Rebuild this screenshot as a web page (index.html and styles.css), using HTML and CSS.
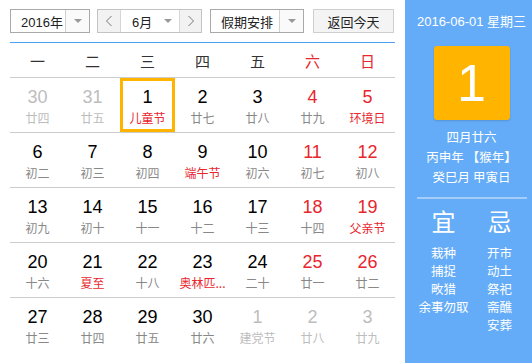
FILE: index.html
```html
<!DOCTYPE html>
<html lang="zh">
<head>
<meta charset="utf-8">
<link rel="stylesheet" href="styles.css">
</head>
<body>
<div class="wrap">
  <div class="main">
    <div class="toolbar">
      <div class="sel sel-year">
        <span class="sel-text">2016年</span>
        <span class="sel-drop"><i class="tri"></i></span>
      </div>
      <div class="sel sel-month">
        <span class="nav"><svg width="8" height="12" viewBox="0 0 8 12"><path d="M6.5 1 L1.5 6 L6.5 11" fill="none" stroke="#777" stroke-width="1"/></svg></span>
        <span class="sel-text month-text">6月</span>
        <span class="month-drop"><i class="tri"></i></span>
        <span class="nav nav-r"><svg width="8" height="12" viewBox="0 0 8 12"><path d="M1.5 1 L6.5 6 L1.5 11" fill="none" stroke="#777" stroke-width="1"/></svg></span>
      </div>
      <div class="sel sel-holiday">
        <span class="sel-text">假期安排</span>
        <span class="sel-drop"><i class="tri"></i></span>
      </div>
      <div class="btn-today">返回今天</div>
    </div>
    <div class="weekdays">
      <div>一</div><div>二</div><div>三</div><div>四</div><div>五</div><div class="red">六</div><div class="red">日</div>
    </div>
    <div class="grid">
      <div class="row">
        <div class="cell other"><b>30</b><span>廿四</span></div>
        <div class="cell other"><b>31</b><span>廿五</span></div>
        <div class="cell sel-day"><b>1</b><span class="fest">儿童节</span></div>
        <div class="cell"><b>2</b><span>廿七</span></div>
        <div class="cell"><b>3</b><span>廿八</span></div>
        <div class="cell wk"><b>4</b><span>廿九</span></div>
        <div class="cell wk"><b>5</b><span class="fest">环境日</span></div>
      </div>
      <div class="row">
        <div class="cell"><b>6</b><span>初二</span></div>
        <div class="cell"><b>7</b><span>初三</span></div>
        <div class="cell"><b>8</b><span>初四</span></div>
        <div class="cell"><b>9</b><span class="fest">端午节</span></div>
        <div class="cell"><b>10</b><span>初六</span></div>
        <div class="cell wk"><b>11</b><span>初七</span></div>
        <div class="cell wk"><b>12</b><span>初八</span></div>
      </div>
      <div class="row">
        <div class="cell"><b>13</b><span>初九</span></div>
        <div class="cell"><b>14</b><span>初十</span></div>
        <div class="cell"><b>15</b><span>十一</span></div>
        <div class="cell"><b>16</b><span>十二</span></div>
        <div class="cell"><b>17</b><span>十三</span></div>
        <div class="cell wk"><b>18</b><span>十四</span></div>
        <div class="cell wk"><b>19</b><span class="fest">父亲节</span></div>
      </div>
      <div class="row">
        <div class="cell"><b>20</b><span>十六</span></div>
        <div class="cell"><b>21</b><span class="fest">夏至</span></div>
        <div class="cell"><b>22</b><span>十八</span></div>
        <div class="cell"><b>23</b><span class="fest">奥林匹...</span></div>
        <div class="cell"><b>24</b><span>二十</span></div>
        <div class="cell wk"><b>25</b><span>廿一</span></div>
        <div class="cell wk"><b>26</b><span>廿二</span></div>
      </div>
      <div class="row last">
        <div class="cell"><b>27</b><span>廿三</span></div>
        <div class="cell"><b>28</b><span>廿四</span></div>
        <div class="cell"><b>29</b><span>廿五</span></div>
        <div class="cell"><b>30</b><span>廿六</span></div>
        <div class="cell other"><b>1</b><span>建党节</span></div>
        <div class="cell other"><b>2</b><span>廿八</span></div>
        <div class="cell other"><b>3</b><span>廿九</span></div>
      </div>
    </div>
  </div>
  <div class="side">
    <div class="side-date">2016-06-01 星期三</div>
    <div class="big-day">1</div>
    <div class="lunar">
      <div>四月廿六</div>
      <div>丙申年 【猴年】</div>
      <div>癸巳月 甲寅日</div>
    </div>
    <div class="sep"></div>
    <div class="yiji">
      <div class="col">
        <div class="yj-title">宜</div>
        <div>栽种</div><div>捕捉</div><div>畋猎</div><div>余事勿取</div>
      </div>
      <div class="col">
        <div class="yj-title">忌</div>
        <div>开市</div><div>动土</div><div>祭祀</div><div>斋醮</div><div>安葬</div>
      </div>
    </div>
  </div>
</div>
</body>
</html>
```
FILE: styles.css
```css
* { box-sizing: border-box; }
html, body { margin: 0; padding: 0; background: #fff; }
body {
  font-family: "Liberation Sans", "Noto Sans CJK SC", sans-serif;
  color: #000;
  width: 532px;
  height: 363px;
  overflow: hidden;
}
.wrap { display: flex; height: 363px; }
.main { width: 405px; padding: 0 10px; }

.toolbar {
  display: flex;
  align-items: stretch;
  height: 43px;
  padding: 9px 0 10px;
  border-bottom: 1px solid #4ea1f2;
}
.sel {
  display: flex;
  border: 1px solid #a9a9a9;
  background: #fff;
  font-size: 13px;
  color: #222;
  height: 24px;
}
.sel-text { display: flex; align-items: center; padding-left: 10px; flex: 1; }
.sel-drop {
  width: 24px;
  border-left: 1px solid #d0d0d0;
  background: #fafafa;
  display: flex; align-items: center; justify-content: center;
}
.tri {
  display: block;
  width: 0; height: 0;
  border-left: 4px solid transparent;
  border-right: 4px solid transparent;
  border-top: 4px solid #999;
}
.sel-year { width: 80px; }
.sel-month { width: 105px; margin-left: 7px; border-color: #c3c3c3; }
.nav {
  width: 22px;
  background: #f2f2f2;
  display: flex; align-items: center; justify-content: center;
}
.nav-r { border-left: 1px solid #d6d6d6; }
.month-text { border-left: 1px solid #d6d6d6; padding-left: 11px; }
.month-drop { width: 22px; display: flex; align-items: center; justify-content: center; }
.sel-holiday { width: 94px; margin-left: 8px; }
.btn-today {
  width: 81px;
  margin-left: 9px;
  height: 24px;
  border: 1px solid #cfcfcf;
  background: #f4f4f4;
  font-size: 13px;
  color: #222;
  display: flex; align-items: center; justify-content: center;
}

.weekdays {
  display: grid;
  grid-template-columns: repeat(7, 55px);
  height: 35px;
  border-bottom: 1px solid #cccccc;
  font-family: "Noto Sans CJK SC", sans-serif;
  font-size: 15px;
  color: #333;
}
.weekdays div { display: flex; align-items: center; justify-content: center; }
.weekdays .red { color: #e8262d; }

.row {
  display: grid;
  grid-template-columns: repeat(7, 55px);
  height: 55px;
  border-bottom: 1px solid #cccccc;
}
.row.last { border-bottom: none; }
.cell {
  display: flex;
  flex-direction: column;
  align-items: center;
  padding-top: 8px;
}
.cell b {
  font-weight: normal;
  font-size: 18px;
  line-height: 22px;
  color: #000;
}
.cell span {
  font-family: "Noto Sans CJK SC", sans-serif;
  font-size: 12px;
  line-height: 18px;
  margin-top: 1px;
  color: #888;
}
.cell.wk b { color: #e8262d; }
.cell .fest { color: #e8262d; }
.cell.other b, .cell.other span { color: #bdbdbd; }
.cell.sel-day { border: 3px solid #ffb400; height: 54px; padding-top: 5px; }

.side {
  width: 127px;
  background: #64acf7;
  color: #fff;
  padding-left: 6px;
  display: flex;
  flex-direction: column;
  align-items: center;
  font-family: "Noto Sans CJK SC", sans-serif;
}
.side-date {
  font-family: "Liberation Sans", "Noto Sans CJK SC", sans-serif;
  font-size: 13px;
  margin-top: 14px;
  line-height: 16px;
}
.big-day {
  width: 76px;
  height: 74px;
  margin-top: 16px;
  background: #ffb400;
  border-radius: 3px;
  box-shadow: 0 1px 2px rgba(0,0,0,0.15);
  font-family: "Liberation Sans", sans-serif;
  font-size: 52px;
  line-height: 74px;
  text-align: center;
}
.lunar {
  margin-top: 7px;
  font-size: 12.5px;
  line-height: 20px;
  text-align: center;
}
.sep {
  width: 110px;
  height: 2px;
  background: #a6cdf8;
  margin-top: 10px;
}
.yiji {
  display: flex;
  gap: 4px;
  margin-top: 7px;
}
.col {
  width: 52px;
  text-align: center;
  font-size: 12.5px;
  line-height: 18px;
}
.yj-title {
  font-size: 24px;
  line-height: 30px;
  margin-bottom: 8px;
}
```
